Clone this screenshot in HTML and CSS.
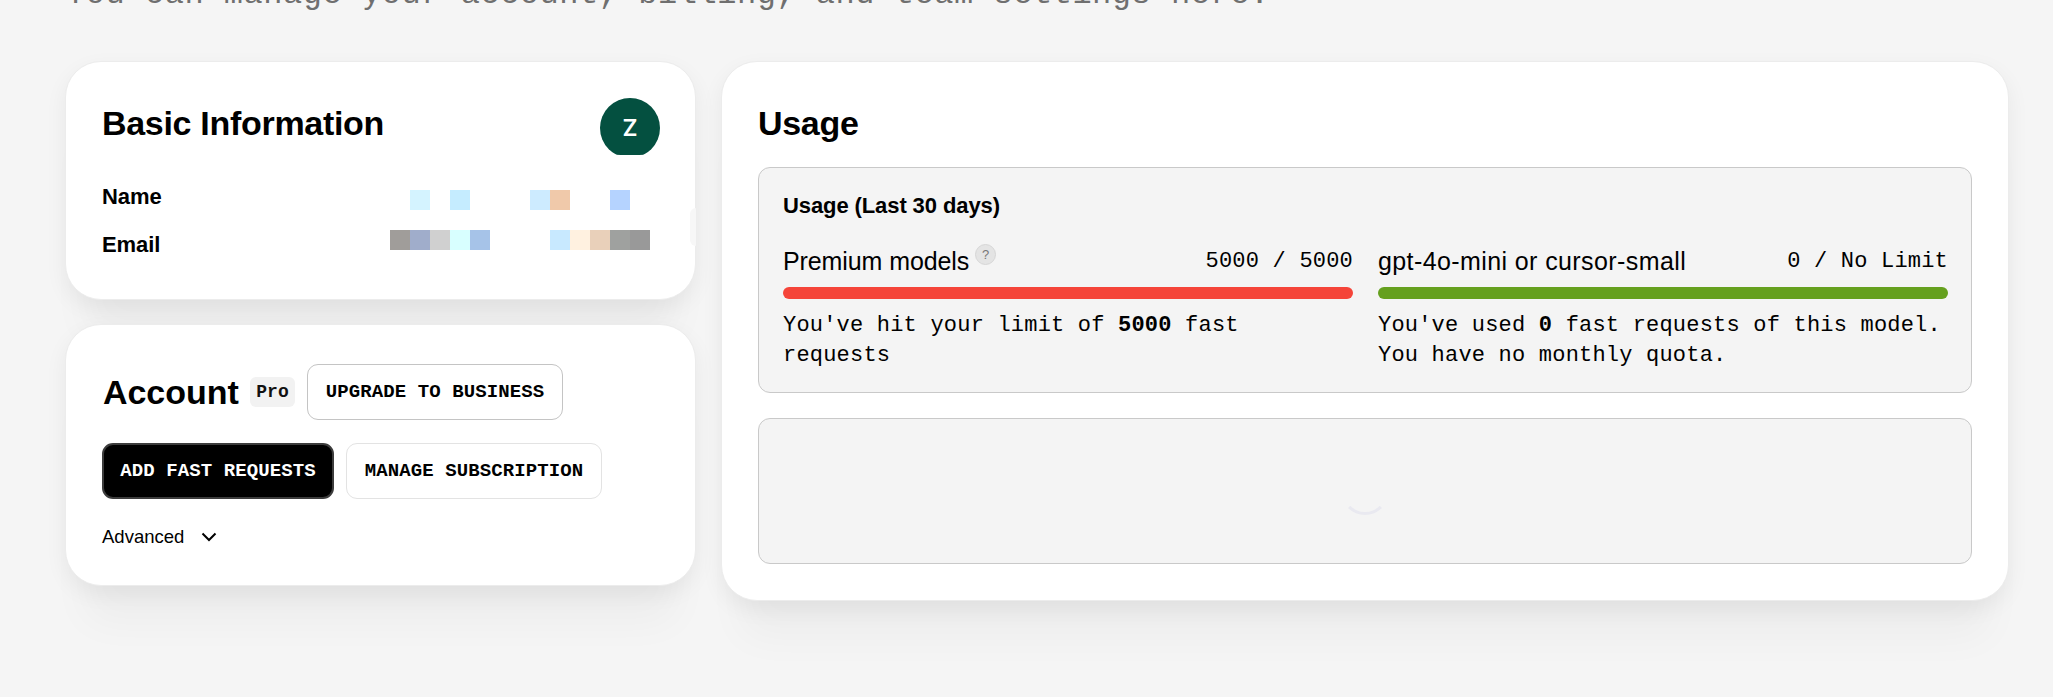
FILE: index.html
```html
<!DOCTYPE html>
<html lang="en">
<head>
<meta charset="utf-8">
<title>Settings</title>
<link rel="stylesheet" href="styles.css">
</head>
<body>
<main class="page">
  <p class="intro">You can manage your account, billing, and team settings here.</p>
  <div class="layout">
    <div class="left-col">
      <section class="card info-card">
        <span class="edge-arrow"></span>
        <div class="info-head">
          <h2 class="title">Basic Information</h2>
          <div class="avatar-clip"><div class="avatar">Z</div></div>
        </div>
        <div class="info-row name-row">
          <span class="label">Name</span>
          <div class="mosaic">
            <i class="px c1"></i><i class="px"></i><i class="px c2"></i><i class="px"></i><i class="px"></i><i class="px"></i><i class="px c3"></i><i class="px c4"></i><i class="px"></i><i class="px"></i><i class="px c5"></i><i class="px"></i>
          </div>
        </div>
        <div class="info-row email-row">
          <span class="label">Email</span>
          <div class="mosaic">
            <i class="px c6"></i><i class="px c7"></i><i class="px c8"></i><i class="px c9"></i><i class="px c10"></i><i class="px"></i><i class="px"></i><i class="px"></i><i class="px c11"></i><i class="px c12"></i><i class="px c13"></i><i class="px c14"></i><i class="px c15"></i>
          </div>
        </div>
      </section>
      <section class="card account-card">
        <div class="account-head">
          <h2 class="title">Account</h2>
          <span class="tag">Pro</span>
          <button class="btn btn-strong">UPGRADE TO BUSINESS</button>
        </div>
        <div class="account-actions">
          <button class="btn btn-dark">ADD FAST REQUESTS</button>
          <button class="btn btn-light">MANAGE SUBSCRIPTION</button>
        </div>
        <div class="advanced">
          <span>Advanced</span>
          <svg class="chevron" width="16" height="10" viewBox="0 0 16 10" fill="none" stroke="#000" stroke-width="2"><path d="M1.500 1.500 8 8l6.500-6.500"/></svg>
        </div>
      </section>
    </div>
    <section class="card usage-card">
      <h2 class="title usage-title">Usage</h2>
      <div class="box usage-box">
        <h3 class="box-title">Usage (Last 30 days)</h3>
        <div class="meters">
          <div class="meter">
            <div class="meter-head">
              <span class="meter-name premium">Premium models<span class="help">?</span></span>
              <span class="count">5000 / 5000</span>
            </div>
            <div class="bar bar-red"></div>
            <p class="note">You've hit your limit of <b>5000</b> fast requests</p>
          </div>
          <div class="meter">
            <div class="meter-head">
              <span class="meter-name small-model">gpt-4o-mini or cursor-small</span>
              <span class="count">0 / No Limit</span>
            </div>
            <div class="bar bar-green"></div>
            <p class="note">You've used <b>0</b> fast requests of this model. You have no monthly quota.</p>
          </div>
        </div>
      </div>
      <div class="box loading-box"><span class="spinner"></span></div>
    </section>
  </div>
</main>
</body>
</html>
```
FILE: styles.css
```css
* { box-sizing: border-box; }
html, body { margin: 0; height: 100%; overflow: hidden; }
body { background: #f5f5f5; font-family: "Liberation Sans", Arial, sans-serif; color: #000; }
.page { padding: 0 45px 0 65px; }
.intro {
  margin: -22px 0 0 1px;
  height: 83px;
  font: 32px/34px "Liberation Mono", monospace;
  letter-spacing: .53px;
  color: #6f6f6f;
  white-space: nowrap;
}
.layout { display: grid; grid-template-columns: 631px 1288px; gap: 25px; align-items: start; }
.left-col { display: flex; flex-direction: column; gap: 24px; }
.card {
  position: relative;
  background: #fff;
  border: 1px solid #ececec;
  border-radius: 36px;
  padding: 36px;
  box-shadow: 0 8px 22px rgba(0,0,0,.06), 0 56px 40px -20px rgba(0,0,0,.035);
}
.title {
  margin: 0;
  font-size: 34px;
  line-height: 40px;
  font-weight: 700;
  letter-spacing: -.3px;
  white-space: nowrap;
}
.info-card { height: 239px; padding-top: 27px; }
.edge-arrow {
  position: absolute;
  right: -1px;
  top: 146px;
  width: 6px;
  height: 38px;
  background: #f7f7f7;
  border-radius: 6px 0 0 6px;
}
.info-head { display: flex; justify-content: space-between; align-items: flex-start; height: 75px; margin-right: -1px; }
.info-head .title { margin-top: 14px; }
.avatar-clip { width: 60px; height: 57px; overflow: hidden; border-radius: 0 0 26px 26px / 0 0 4px 4px; margin-top: 9px; }
.avatar {
  width: 60px; height: 60px; border-radius: 50%;
  background: #045040; color: #fff;
  display: flex; align-items: center; justify-content: center;
  font: 600 23px "Inter", sans-serif;
}
.info-row { display: flex; justify-content: space-between; align-items: center; padding-right: 9px; }
.name-row { height: 24px; margin-top: 24px; }
.email-row { height: 24px; margin-top: 16px; }
.label { font-size: 22px; font-weight: 700; letter-spacing: -.1px; position: relative; top: -3px; }
.email-row .label { top: 5px; }
.mosaic { display: flex; }
.px { display: block; width: 20px; height: 20px; }
.c1 { background: #d4f3ff; } .c2 { background: #c5ecff; } .c3 { background: #cdebff; }
.c4 { background: #f0c9aa; } .c5 { background: #b5d3ff; } .c6 { background: #a09d9a; }
.c7 { background: #a0adcb; } .c8 { background: #d0d0d0; } .c9 { background: #d8ffff; }
.c10 { background: #a6c3e8; } .c11 { background: #c8e9ff; } .c12 { background: #fff1e0; }
.c13 { background: #e9d0ba; } .c14 { background: #9fa19f; } .c15 { background: #999; }
.account-card { height: 262px; padding: 39px 36px 36px 37px; }
.account-head { display: flex; align-items: center; }
.account-head .title { margin-right: 12px; width: 135px; letter-spacing: -.05px; }
.tag {
  width: 45px; height: 30px; margin-right: 12px;
  background: #f2f2f2; border-radius: 6px;
  font: 700 18px/30px "Liberation Mono", monospace;
  text-align: center; color: #111;
}
.btn {
  height: 56px; padding: 0;
  font: 700 19px "Liberation Mono", monospace;
  letter-spacing: .1px;
  border-radius: 11px;
  background: #fff; color: #000;
  border: 1px solid #e3e3e3;
}
.btn-strong { width: 256px; border-color: #c4c4c4; }
.account-actions { display: flex; gap: 12px; margin-top: 23px; margin-left: -1px; }
.btn-dark { width: 232px; background: #000; color: #fff; border: 2px solid #3c3c3c; }
.btn-light { width: 256px; }
.advanced { display: flex; align-items: center; gap: 17px; margin-top: 27px; font-size: 18.500px; margin-left: -1px; }
.usage-card { height: 540px; padding-top: 27px; }
.usage-title { margin: 14px 0 24px; }
.box {
  background: #f4f4f4;
  border: 1px solid #c9c9c9;
  border-radius: 12px;
}
.usage-box { height: 226px; padding: 25px 24px 24px; }
.box-title {
  margin: 0;
  font-size: 22px; line-height: 26px; font-weight: 700;
  letter-spacing: -.1px;
}
.meters { display: grid; grid-template-columns: 570px 570px; gap: 25px; margin-top: 24px; }
.meter-head { display: flex; justify-content: space-between; align-items: flex-end; height: 34px; }
.meter-name { font-size: 25px; line-height: 30px; display: flex; white-space: nowrap; padding-bottom: 1px; }
.premium { letter-spacing: -.1px; }
.small-model { letter-spacing: .4px; }
.help {
  width: 21px; height: 21px; margin: -2px 0 0 6px;
  border: 1px solid #d6d6d6; border-radius: 50%;
  background: #e4e4e4; color: #777;
  font-size: 13px; line-height: 19px; text-align: center; letter-spacing: 0;
}
.count { font: 22px/30px "Liberation Mono", monospace; letter-spacing: .2px; }
.bar { height: 12px; border-radius: 6px; margin-top: 10px; }
.bar-red { background: #f54439; }
.bar-green { background: #65a01e; }
.note {
  margin: 12px 0 0;
  font: 22px/30px "Liberation Mono", monospace;
  letter-spacing: .2px;
}
.loading-box {
  height: 146px; margin-top: 25px;
  display: flex; align-items: center; justify-content: center;
}
.spinner {
  width: 48px; height: 48px; border-radius: 50%;
  border: 3px solid transparent;
  border-bottom-color: #e9e9f0;
}
```
